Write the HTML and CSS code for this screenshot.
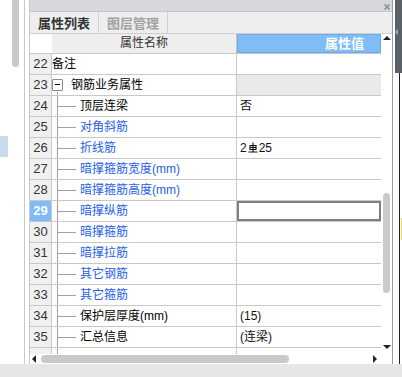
FILE: index.html
```html
<!DOCTYPE html>
<html lang="zh-CN">
<head>
<meta charset="UTF-8">
<title>属性列表</title>
<link rel="stylesheet" href="styles.css">
</head>
<body>

<div class="screen">
    <div class="main">
        <div class="side">
            <div class="side-thumb"></div>
            <div class="side-sel"></div>
        </div>
        <div class="gutter"></div>

        <div class="panel">
            <div class="titlebar">
                <svg class="close" width="6" height="6" viewBox="0 0 6 6"><path d="M0.5 0.5L5.5 5.5M5.5 0.5L0.5 5.5"/></svg>
            </div>
            <div class="tabs">
                <div class="tab active">属性列表</div>
                <div class="tab">图层管理</div>
            </div>

            <div class="body">
                <div class="table">
                    <div class="head">
                        <div class="hnum"></div>
                        <div class="hname">属性名称</div>
                        <div class="hval">属性值</div>
                    </div>

                    <div class="rows">
                        <div class="row">
                            <div class="num">22</div>
                            <div class="name top">备注</div>
                            <div class="val"></div>
                        </div>
                        <div class="row">
                            <div class="num">23</div>
                            <div class="name group"><span class="fold"></span>钢筋业务属性</div>
                            <div class="val off"></div>
                        </div>
                        <div class="row">
                            <div class="num">24</div>
                            <div class="name leaf">顶层连梁</div>
                            <div class="val">否</div>
                        </div>
                        <div class="row">
                            <div class="num">25</div>
                            <div class="name leaf blue">对角斜筋</div>
                            <div class="val"></div>
                        </div>
                        <div class="row">
                            <div class="num">26</div>
                            <div class="name leaf blue">折线筋</div>
                            <div class="val">2<svg class="rebar" width="10" height="11" viewBox="0 0 10 11"><path d="M5 0.5V10M2 3.5H8V7.5H2ZM2 5.5H8M0.5 10H9.5"/></svg>25</div>
                        </div>
                        <div class="row">
                            <div class="num">27</div>
                            <div class="name leaf blue">暗撑箍筋宽度(mm)</div>
                            <div class="val"></div>
                        </div>
                        <div class="row">
                            <div class="num">28</div>
                            <div class="name leaf blue">暗撑箍筋高度(mm)</div>
                            <div class="val"></div>
                        </div>
                        <div class="row">
                            <div class="num sel">29</div>
                            <div class="name leaf blue">暗撑纵筋</div>
                            <div class="val edit"></div>
                        </div>
                        <div class="row">
                            <div class="num">30</div>
                            <div class="name leaf blue">暗撑箍筋</div>
                            <div class="val"></div>
                        </div>
                        <div class="row">
                            <div class="num">31</div>
                            <div class="name leaf blue">暗撑拉筋</div>
                            <div class="val"></div>
                        </div>
                        <div class="row">
                            <div class="num">32</div>
                            <div class="name leaf blue">其它钢筋</div>
                            <div class="val"></div>
                        </div>
                        <div class="row">
                            <div class="num">33</div>
                            <div class="name leaf blue">其它箍筋</div>
                            <div class="val"></div>
                        </div>
                        <div class="row">
                            <div class="num">34</div>
                            <div class="name leaf">保护层厚度(mm)</div>
                            <div class="val">(15)</div>
                        </div>
                        <div class="row">
                            <div class="num">35</div>
                            <div class="name leaf">汇总信息</div>
                            <div class="val">(连梁)</div>
                        </div>
                        <div class="row">
                            <div class="num"></div>
                            <div class="name leaf"></div>
                            <div class="val"></div>
                        </div>
                    </div>

                    <div class="hscroll">
                        <span class="arr-l"></span>
                        <div class="hthumb"></div>
                        <span class="arr-r"></span>
                    </div>
                </div>

                <div class="vscroll">
                    <span class="arr-u"></span>
                    <div class="vthumb"></div>
                    <span class="arr-d"></span>
                </div>
            </div>
        </div>

        <div class="edge">
            <div class="edge-top"><span class="edge-tip"></span></div>
            <div class="edge-line"><div class="edge-mark"></div></div>
        </div>
    </div>
    <div class="status"></div>
</div>

</body>
</html>
```

FILE: styles.css
```css
/* ─── Layout ─────────────────────────────────────────────────── */
*{box-sizing:border-box;margin:0;padding:0}
body{
    font-family:"Liberation Sans","Noto Sans CJK SC",sans-serif;
    font-size:12px;color:#000;background:#fff;
    width:402px;height:377px;overflow:hidden;
}
.screen{display:flex;flex-direction:column;height:377px}
.main{display:flex;height:364px}
.status{flex:1;background:#e6e6e6}

/* left neighbour pane */
.side{width:26px;border-right:1px solid #c8c8c8;display:flex;flex-direction:column}
.side-thumb{margin-left:12px;width:7px;height:67px;background:#c9c9c9;border-radius:0 0 4px 4px}
.side-sel{margin-top:69px;width:8px;height:21px;background:#c9daf1}
.gutter{width:4px}

/* ─── Panel ──────────────────────────────────────────────────── */
.panel{width:364px;border-left:1px solid #c8c8c8;border-right:1px solid #9a9a9a;display:flex;flex-direction:column}
.titlebar{
    height:12px;background:#d6d8dd;border-bottom:1px solid #c4c6ca;
    display:flex;justify-content:flex-end;align-items:flex-start;padding:4px 2px 0 0;
}
.close path{stroke:#8a8a8a;stroke-width:1.5;fill:none}

.tabs{height:22px;background:#eeeeee;border-bottom:1px solid #cfcfcf;display:flex}
.tab{
    width:69px;border-right:1px solid #d2d2d2;
    font-size:13px;font-weight:bold;color:#a2a2a2;
    display:flex;align-items:center;justify-content:center;padding-bottom:1px;
}
.tab.active{color:#333}

.body{flex:1;display:flex}
.table{width:351px;display:flex;flex-direction:column}

/* ─── Grid ───────────────────────────────────────────────────── */
.head,.row{display:grid;grid-template-columns:22px 185px 144px}
.head{height:20px;border-bottom:1px solid #c8c8c8}
.hnum{background:#fff}
.hname{background:#eeeeee;border-right:1px solid #c8c8c8;color:#333;text-align:center;line-height:19px}
.hval{
    background:#80bcf6;border:1px solid #6aa9ec;color:#fff;
    font-size:13px;font-weight:bold;text-align:right;padding-right:16px;line-height:17px;
}

.rows{height:300px;overflow:hidden}
.row{height:21px}
.row > div{border-bottom:1px solid #c8c8c8;line-height:20px;white-space:nowrap;overflow:hidden}
.num{background:#f0f0f0;border-right:1px solid #c8c8c8;text-align:center;font-size:13px;color:#333}
.num.sel{background:#80bbf6;color:#fff;font-weight:bold}
.name{border-right:1px solid #c8c8c8}
.name.top{padding-left:0}
.name.blue{color:#1e5ee6}

/* tree connectors */
.name.group{
    display:flex;align-items:center;padding-left:0;
    background:linear-gradient(#a0a0a0,#a0a0a0) 5px 17px/1px 100% no-repeat;
}
.fold{
    width:11px;height:12px;margin-right:8px;margin-top:-1px;
    border:1px solid #8c8c8c;border-radius:1px;background:#fff;
    display:flex;align-items:center;justify-content:center;
}
.fold::before{content:"";width:5px;height:1px;background:#000}
.name.leaf{
    padding-left:28px;
    background:
        linear-gradient(#a0a0a0,#a0a0a0) 5px 0/1px 100% no-repeat,
        linear-gradient(#a0a0a0,#a0a0a0) 6px 10px/18px 1px no-repeat;
}

.val{padding-left:3px;color:#111}
.val.off{background:#e9e9e9}
.val.edit{box-shadow:inset 0 0 0 2px #7f7f7f}
.rebar{vertical-align:-1px;margin:0 1px}
.rebar path{stroke:#111;stroke-width:1.1;fill:none}

/* ─── Scrollbars ─────────────────────────────────────────────── */
.hscroll{height:10px;display:flex;align-items:center;padding-left:2px}
.arr-l{width:0;height:0;border-top:4px solid transparent;border-bottom:4px solid transparent;border-right:4px solid #222}
.hthumb{margin-left:5px;width:248px;height:8px;background:#c9c9c9;border-radius:4px}
.arr-r{margin-left:auto;margin-right:4px;width:0;height:0;border-top:4px solid transparent;border-bottom:4px solid transparent;border-left:4px solid #222}

.vscroll{width:11px;display:flex;flex-direction:column;align-items:center;padding-top:2px}
.arr-u{width:0;height:0;border-left:4px solid transparent;border-right:4px solid transparent;border-bottom:4px solid #222}
.vthumb{margin-top:153px;width:7px;height:100px;background:#cbcbcb;border-radius:4px}
.arr-d{margin-top:52px;width:0;height:0;border-left:4px solid transparent;border-right:4px solid transparent;border-top:4px solid #222}

/* ─── Right edge ─────────────────────────────────────────────── */
.edge{flex:1;display:flex;flex-direction:column}
.edge-top{height:73px;margin-left:2px;background:#5a6169;padding-top:29px}
.edge-tip{display:block;width:0;height:0;border-top:3px solid transparent;border-bottom:3px solid transparent;border-right:3px solid #a7adb3}
.edge-line{flex:1;margin-left:6px;border-left:1px solid #222}
.edge-mark{margin-top:145px;margin-left:1px;width:1px;height:22px;background:#f3d54a}
```
